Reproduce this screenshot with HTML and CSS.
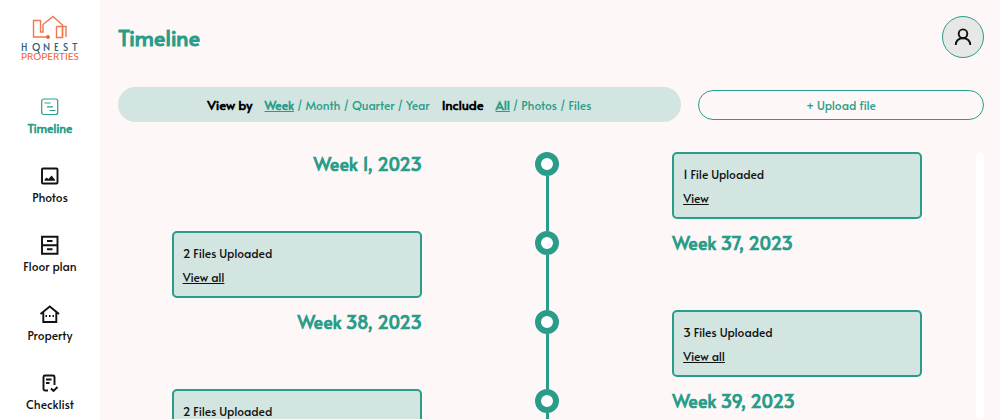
FILE: index.html
```html
<!DOCTYPE html>
<html lang="en">
<head>
<meta charset="utf-8">
<title>Timeline - Honest Properties</title>
<meta name="viewport" content="width=device-width">
<link rel="stylesheet" href="styles.css">
</head>
<body>
<aside class="sidebar">
	<a class="logo" href="#" aria-label="Honest Properties">
		<svg width="60" height="48" viewBox="0 0 60 48">
			<g fill="none" stroke="#f0764e" stroke-width="1.4">
				<path d="M27 22H13.500V5.500H20.500V17H23V9.500L33 1.500L42.500 10V21.500"/>
				<path d="M36.500 11.500H46V22M36.500 11.500V22.500H42.500V11.500"/>
			</g>
			<circle cx="28" cy="22" r="1.900" fill="#ee6230"/>
			<text class="logo-top" x="1" y="36">H</text>
			<text class="logo-top" x="12" y="36">O</text>
			<text class="logo-top" x="23" y="36">N</text>
			<text class="logo-top" x="34" y="36">E</text>
			<text class="logo-top" x="43" y="36">S</text>
			<text class="logo-top" x="52" y="36">T</text>
			<path d="M17 34.500l2.500 4" stroke="#315f80" stroke-width="1.200"/>
			<text class="logo-bottom" x="1" y="45">PROPERTIES</text>
		</svg>
	</a>
	<nav class="menu">
		<a class="menu-item active" href="#">
			<svg class="icon" viewBox="0 0 20 20"><rect x="1.700" y="2" width="16" height="15.500" rx="2"/><path d="M4.500 6h6M7 9.800h6M9.500 13.500h6"/></svg>
			Timeline
		</a>
		<a class="menu-item" href="#">
			<svg class="icon thick" viewBox="0 0 20 20"><rect x="2" y="2.500" width="15.500" height="15" rx="1"/><path class="solid" d="M4.500 14.800v-1l2-2.300 2 1.500 3-3.500 3.500 4.300v1z"/></svg>
			Photos
		</a>
		<a class="menu-item" href="#">
			<svg class="icon thick" viewBox="0 0 20 20"><path d="M2 1.800h15.500v17H2zM2 10.200H17.500M7 6h5.500M7 14.300h5.500"/></svg>
			Floor plan
		</a>
		<a class="menu-item" href="#">
			<svg class="icon thick" viewBox="0 0 20 20"><path d="M.5 10L9.800 2.500l9.200 7.500M3.300 8v10h13V8"/><path d="M5.500 12H7M9 12h1.500M12.500 12H14"/></svg>
			Property
		</a>
		<a class="menu-item" href="#">
			<svg class="icon thick" viewBox="0 0 20 20"><path d="M8 17.500H5a1.500 1.500 0 0 1-1.500-1.500V4A1.500 1.500 0 0 1 5 2.500h8A1.500 1.500 0 0 1 14.500 4v8M6 6.500h5.500M6 10h3.500M11 15.500l2.500 2.500 4-4"/></svg>
			Checklist
		</a>
	</nav>
</aside>
<main class="page">
	<header class="page-header">
		<h1>Timeline</h1>
		<button class="profile" type="button" aria-label="Profile">
			<svg width="20" height="20" viewBox="0 0 20 20"><circle cx="10" cy="6.700" r="4.300"/><path d="M2.700 18c.3-4.500 3.300-6.800 7.300-6.800s7 2.300 7.300 6.800"/></svg>
		</button>
	</header>
	<div class="toolbar">
		<div class="filters">
			<strong>View by</strong>
			<div class="options"><a class="selected" href="#">Week</a> / <a href="#">Month</a> / <a href="#">Quarter</a> / <a href="#">Year</a></div>
			<strong>Include</strong>
			<div class="options"><a class="selected" href="#">All</a> / <a href="#">Photos</a> / <a href="#">Files</a></div>
		</div>
		<button class="upload" type="button">+ Upload file</button>
	</div>
	<div class="timeline">
		<div class="entries">
			<section class="entry">
				<h2>Week 1, 2023</h2>
				<div class="marker"></div>
				<div class="card"><p>1 File Uploaded</p><a href="#">View</a></div>
			</section>
			<section class="entry reverse">
				<h2>Week 37, 2023</h2>
				<div class="marker"></div>
				<div class="card"><p>2 Files Uploaded</p><a href="#">View all</a></div>
			</section>
			<section class="entry">
				<h2>Week 38, 2023</h2>
				<div class="marker"></div>
				<div class="card"><p>3 Files Uploaded</p><a href="#">View all</a></div>
			</section>
			<section class="entry reverse">
				<h2>Week 39, 2023</h2>
				<div class="marker"></div>
				<div class="card"><p>2 Files Uploaded</p><a href="#">View all</a></div>
			</section>
		</div>
		<div class="track"></div>
	</div>
</main>
</body>
</html>
```
FILE: styles.css
```css
*,
::before,
::after {
	box-sizing:border-box;
}
body {
	margin:0;
	height:100vh;
	display:flex;
	overflow:hidden;
	background:#fdf7f7;
	color:#111;
	font:400 12px/16px Alata, Lato, sans-serif;
}
a {
	color:inherit;
	text-decoration:none;
}
h1,
h2,
p {
	margin:0;
}
button {
	font:inherit;
	cursor:pointer;
}

/* sidebar */
.sidebar {
	flex:none;
	width:100px;
	padding-top:15px;
	overflow:hidden;
	background:#fff;
}
.logo {
	display:block;
	text-align:center;
}
.logo svg {
	display:block;
	margin:auto;
}
.logo-top {
	font-size:10px;
	fill:#315f80;
}
.logo-bottom {
	font-family:Lato, sans-serif;
	font-size:10px;
	fill:#ee6230;
}
.menu {
	display:flex;
	flex-direction:column;
	gap:30px;
	margin-top:34px;
}
.menu-item {
	display:flex;
	flex-direction:column;
	align-items:center;
	gap:3px;
}
.menu-item.active {
	color:#2a9d8a;
	font-weight:700;
}
.icon {
	width:20px;
	height:20px;
	fill:none;
	stroke:currentColor;
	stroke-width:1.2;
}
.icon.thick {
	stroke-width:1.9;
}
.icon .solid {
	fill:currentColor;
	stroke:none;
}

/* page */
.page {
	flex:1;
	min-width:0;
	display:flex;
	flex-direction:column;
	padding:16px 16px 1px 18px;
}
.page-header {
	display:flex;
	justify-content:space-between;
	align-items:center;
}
h1 {
	color:#2a9d8a;
	font-size:22px;
	line-height:28px;
}
.profile {
	display:flex;
	align-items:center;
	justify-content:center;
	width:42px;
	height:42px;
	padding:0;
	border:1px solid #2a9d8a;
	border-radius:50%;
	background:#e7e7e7;
}
.profile svg {
	fill:none;
	stroke:#111;
	stroke-width:1.9;
}
.toolbar {
	display:grid;
	grid-template-columns:65% 33%;
	justify-content:space-between;
	align-items:center;
	margin:29px 0 30px;
	color:#2a9d8a;
}
.filters {
	display:flex;
	align-items:center;
	justify-content:center;
	gap:12px;
	height:35px;
	border-radius:18px;
	background:#d2e5e1;
}
.filters strong {
	color:#000;
	font-size:13px;
}
.selected {
	font-weight:700;
	text-decoration:underline;
}
.upload {
	height:30px;
	padding:0;
	border:1px solid #2a9d8a;
	border-radius:15px;
	background:transparent;
	color:#2a9d8a;
}

/* timeline */
.timeline {
	flex:1;
	min-height:0;
	display:flex;
}
.entries {
	flex:1;
	overflow-y:auto;
	scrollbar-width:none;
}
.track {
	width:8px;
	border-radius:4px;
	background:#fff;
}
.entry {
	display:grid;
	grid-template-columns:repeat(3, 1fr);
	grid-template-areas:"left middle right";
	width:calc(100% * 7 / 8);
	margin:auto;
}
h2 {
	grid-area:left;
	color:#2a9d8a;
	font-size:18px;
	line-height:24px;
	text-align:right;
}
.card {
	grid-area:right;
	height:67px;
	margin-bottom:12px;
	padding:12px 9px;
	border:2px solid #2a9d8a;
	border-radius:5px;
	background:#d2e5e1;
}
.card p {
	margin-bottom:8px;
}
.card a {
	text-decoration:underline;
}
.reverse h2 {
	grid-area:right;
	text-align:left;
}
.reverse .card {
	grid-area:left;
}
.marker {
	grid-area:middle;
	display:flex;
	flex-direction:column;
	align-items:center;
}
.marker::before {
	content:'';
	width:24px;
	height:24px;
	border:6px solid #2a9d8a;
	border-radius:50%;
	background:#fff;
}
.marker::after {
	content:'';
	flex:1;
	width:3px;
	background:#2a9d8a;
}
```
